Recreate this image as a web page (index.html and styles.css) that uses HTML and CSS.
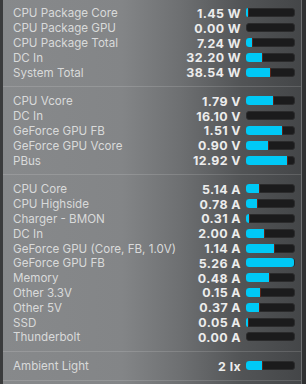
FILE: index.html
```html
<!DOCTYPE html>
<html>
<head>
<meta charset="utf-8">
<link rel="stylesheet" href="styles.css">
</head>
<body>
<div class="panel">
  <div class="section first">
    <div class="row"><span class="label">CPU Package Core</span><span class="value">1.45 W</span><span class="bar"><span class="fill" style="width:2px"></span></span></div>
    <div class="row"><span class="label">CPU Package GPU</span><span class="value">0.00 W</span><span class="bar"></span></div>
    <div class="row"><span class="label">CPU Package Total</span><span class="value">7.24 W</span><span class="bar"><span class="fill" style="width:6px"></span></span></div>
    <div class="row"><span class="label">DC In</span><span class="value">32.20 W</span><span class="bar"><span class="fill" style="width:16px"></span></span></div>
    <div class="row"><span class="label">System Total</span><span class="value">38.54 W</span><span class="bar"><span class="fill" style="width:24px"></span></span></div>
  </div>
  <div class="section">
    <div class="row"><span class="label">CPU Vcore</span><span class="value">1.79 V</span><span class="bar"><span class="fill" style="width:27px"></span></span></div>
    <div class="row"><span class="label">DC In</span><span class="value">16.10 V</span><span class="bar"></span></div>
    <div class="row"><span class="label">GeForce GPU FB</span><span class="value">1.51 V</span><span class="bar"><span class="fill" style="width:36px"></span></span></div>
    <div class="row"><span class="label">GeForce GPU Vcore</span><span class="value">0.90 V</span><span class="bar"><span class="fill" style="width:22px"></span></span></div>
    <div class="row"><span class="label">PBus</span><span class="value">12.92 V</span><span class="bar"><span class="fill" style="width:41px"></span></span></div>
  </div>
  <div class="section">
    <div class="row"><span class="label">CPU Core</span><span class="value">5.14 A</span><span class="bar"><span class="fill" style="width:13px"></span></span></div>
    <div class="row"><span class="label">CPU Highside</span><span class="value">0.78 A</span><span class="bar"><span class="fill" style="width:11px"></span></span></div>
    <div class="row"><span class="label">Charger - BMON</span><span class="value">0.31 A</span><span class="bar"><span class="fill" style="width:3px"></span></span></div>
    <div class="row"><span class="label">DC In</span><span class="value">2.00 A</span><span class="bar"><span class="fill" style="width:18px"></span></span></div>
    <div class="row"><span class="label">GeForce GPU (Core, FB, 1.0V)</span><span class="value">1.14 A</span><span class="bar"><span class="fill" style="width:28px"></span></span></div>
    <div class="row"><span class="label">GeForce GPU FB</span><span class="value">5.26 A</span><span class="bar"><span class="fill full" style="width:50px"></span></span></div>
    <div class="row"><span class="label">Memory</span><span class="value">0.48 A</span><span class="bar"><span class="fill" style="width:23px"></span></span></div>
    <div class="row"><span class="label">Other 3.3V</span><span class="value">0.15 A</span><span class="bar"><span class="fill" style="width:14px"></span></span></div>
    <div class="row"><span class="label">Other 5V</span><span class="value">0.37 A</span><span class="bar"><span class="fill" style="width:13px"></span></span></div>
    <div class="row"><span class="label">SSD</span><span class="value">0.05 A</span><span class="bar"><span class="fill" style="width:2px"></span></span></div>
    <div class="row"><span class="label">Thunderbolt</span><span class="value">0.00 A</span><span class="bar"></span></div>
  </div>
  <div class="section">
    <div class="row"><span class="label">Ambient Light</span><span class="value">2 lx</span><span class="bar"><span class="fill" style="width:16px"></span></span></div>
  </div>
</div>
</body>
</html>
```
FILE: styles.css
```css
html, body {
  margin: 0;
  padding: 0;
  width: 306px;
  height: 384px;
  overflow: hidden;
  background: #2f3031;
}
.panel {
  width: 298px;
  height: 384px;
  border-left: 3px solid #3a3b3c;
  border-right: 1px solid #6e7072;
  background: linear-gradient(90deg, #87898b 0%, #838587 40%, #6d6f71 60%, #525456 80%, #444648 100%);
  font-family: Inter, "Liberation Sans", sans-serif;
}
.section {
  padding: 7px 0 6px;
  border-bottom: 1px solid rgba(255, 255, 255, 0.14);
}
.section.first {
  padding-top: 6px;
}
.row {
  display: flex;
  align-items: center;
  height: 14.8px;
  padding-left: 10px;
}
.label {
  flex: 1;
  color: #d9dada;
  font-size: 11.6px;
  white-space: nowrap;
}
.value {
  color: #ececec;
  font-size: 12.4px;
  font-weight: 700;
  letter-spacing: 0.4px;
  text-align: right;
  white-space: nowrap;
  margin-right: 5px;
}
.bar {
  width: 49px;
  height: 9px;
  box-sizing: border-box;
  background: #1b1b1c;
  border: 1px solid #2b2b2c;
  border-radius: 3px;
  margin-right: 6px;
  margin-top: -1px;
  display: flex;
  overflow: visible;
}
.fill {
  display: block;
  height: 9px;
  margin: -1px 0 0 -1px;
  background: #00c9f6;
  border-radius: 3px 0 0 3px;
  box-shadow: 1px 0 0 #5c2418;
}
.fill.full {
  border-radius: 3px;
  box-shadow: none;
}
```
